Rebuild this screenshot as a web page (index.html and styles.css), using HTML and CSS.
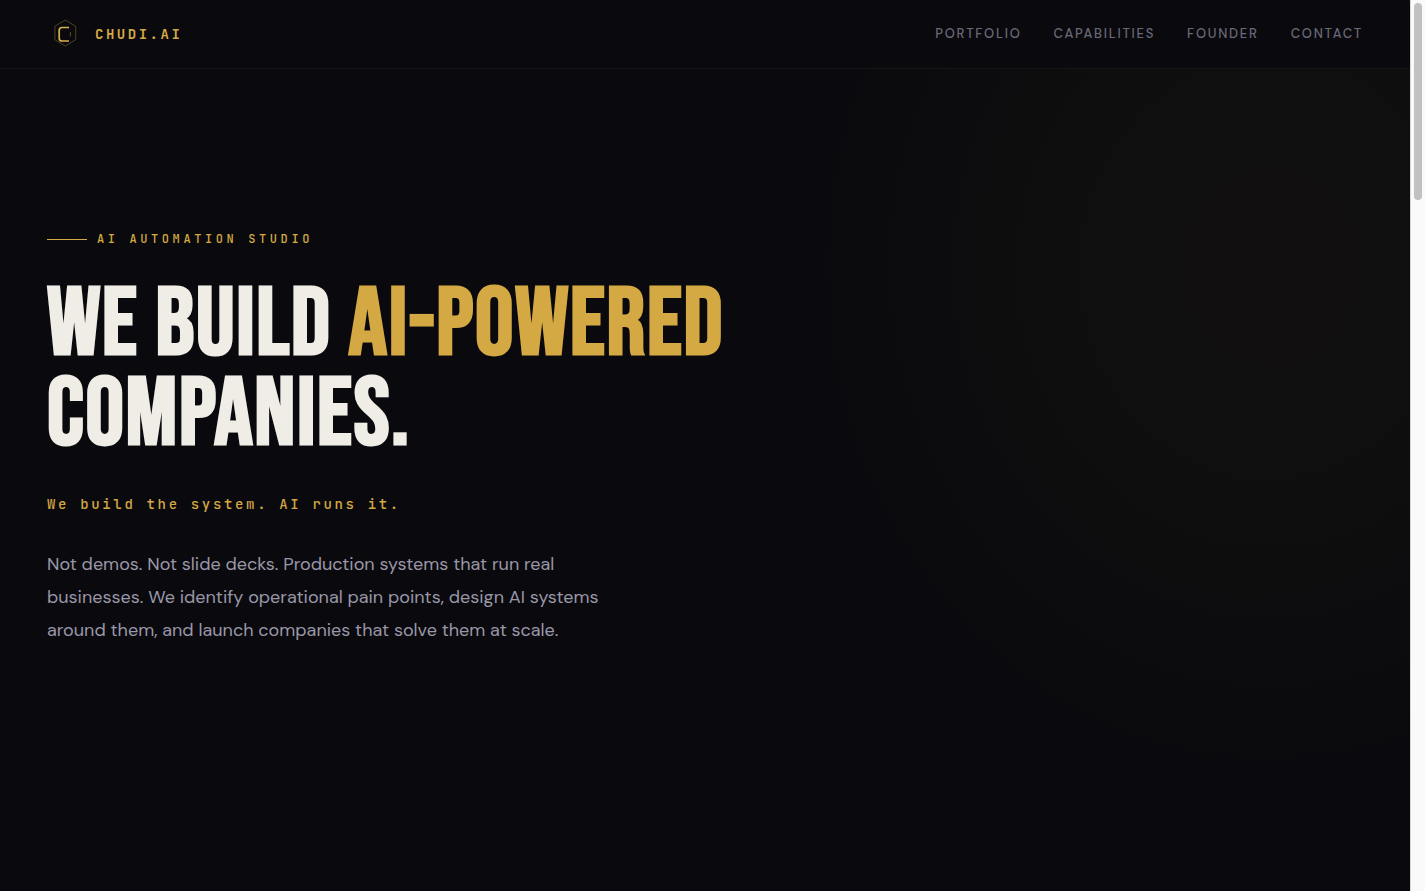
FILE: index.html
```html
<!DOCTYPE html>
<html lang="en">
<head>
<meta charset="utf-8">
<meta name="viewport" content="width=device-width, initial-scale=1">
<title>CHUDI.AI</title>
<link rel="stylesheet" href="styles.css">
</head>
<body>
<div class="shell">
  <div class="page">
    <header class="nav">
      <a class="brand" href="#">
        <svg class="brand-mark" viewBox="0 0 36 36" fill="none" aria-hidden="true">
          <path d="M18.300 4 28.700 10.300V23.700L18.300 30 7.900 23.700V10.300Z" stroke="#d4a843" stroke-opacity=".42" stroke-width=".8"/>
          <path d="M22 11.500H15Q12.200 11.500 12.200 14.200V22.200Q12.200 25 15 25H22" stroke="#d9b04c" stroke-width="1.700"/>
          <path d="M23.400 16V20.500" stroke="#d4a843" stroke-opacity=".55" stroke-width=".8"/>
        </svg>
        <span class="brand-name">CHUDI.AI</span>
      </a>
      <nav class="links" aria-label="Main">
        <a href="#portfolio">Portfolio</a>
        <a href="#capabilities">Capabilities</a>
        <a href="#founder">Founder</a>
        <a href="#contact">Contact</a>
      </nav>
    </header>
    <main class="hero">
      <p class="eyebrow">AI Automation Studio</p>
      <h1 class="title">We build <span class="accent">AI-powered</span> companies.</h1>
      <p class="tagline">We build the system. AI runs it.</p>
      <p class="lead">Not demos. Not slide decks. Production systems that run real businesses. We identify operational pain points, design AI systems around them, and launch companies that solve them at scale.</p>
    </main>
  </div>
  <div class="scroll-track" aria-hidden="true"><div class="scroll-thumb"></div></div>
</div>
</body>
</html>
```
FILE: styles.css
```css
:root {
  --bg: #0a0a0e;
  --gold: #d4a843;
  --ivory: #f0ede6;
  --mono: "JetBrains Mono", "DejaVu Sans Mono", monospace;
  --sans: "DM Sans", Inter, sans-serif;
}

* { box-sizing: border-box; }

body {
  margin: 0;
  background: var(--bg);
  color: var(--ivory);
  font-family: var(--sans);
  -webkit-font-smoothing: antialiased;
}

.shell {
  display: grid;
  grid-template-columns: 1fr 15px;
  min-height: 100vh;
}

.page {
  display: flex;
  flex-direction: column;
  background: radial-gradient(33% 58% at 90% 30%, #120f10, #0f0f0f 40%, var(--bg)) var(--bg);
}

.nav {
  display: flex;
  align-items: center;
  justify-content: space-between;
  padding: 16px 47px;
  background: #0a0a0e;
  border-bottom: 1px solid #151416;
}

.brand {
  display: flex;
  align-items: center;
  gap: 12px;
  color: var(--gold);
  text-decoration: none;
}

.brand-mark {
  width: 36px;
  height: 36px;
}

.brand-name {
  font: 600 14px/20px var(--mono);
  letter-spacing: 0.18em;
}

.links {
  display: flex;
  gap: 32px;
}

.links a {
  color: #6b6878;
  font-size: 13px;
  font-weight: 500;
  line-height: 20px;
  letter-spacing: 0.135em;
  text-transform: uppercase;
  text-decoration: none;
}

.hero {
  flex: 1;
  padding: 159px 47px 96px;
}

.eyebrow {
  display: flex;
  align-items: center;
  gap: 10px;
  margin: 0 0 31px;
  color: var(--gold);
  font: 500 12px/22px var(--mono);
  letter-spacing: 0.3em;
  text-transform: uppercase;
}

.eyebrow::before {
  content: "";
  width: 40px;
  height: 1px;
  background: var(--gold);
}

.title {
  max-width: 900px;
  margin: 0 0 31px;
  font: 700 96px/90px "Bebas Neue", "Roboto Condensed", sans-serif;
  letter-spacing: 0.017em;
  text-transform: uppercase;
}

.accent { color: var(--gold); }

.tagline {
  margin: 0 0 32px;
  color: var(--gold);
  font: 500 14px/24px var(--mono);
  letter-spacing: 0.19em;
}

.lead {
  max-width: 560px;
  margin: 0;
  color: #9a97a8;
  font-size: 18px;
  line-height: 33px;
}

.scroll-track {
  padding: 3px;
  background: #fafafa;
  border-left: 1px solid #d8d8d8;
}

.scroll-thumb {
  width: 8px;
  height: 197px;
  border-radius: 4px;
  background: #c1c1c1;
}
```
